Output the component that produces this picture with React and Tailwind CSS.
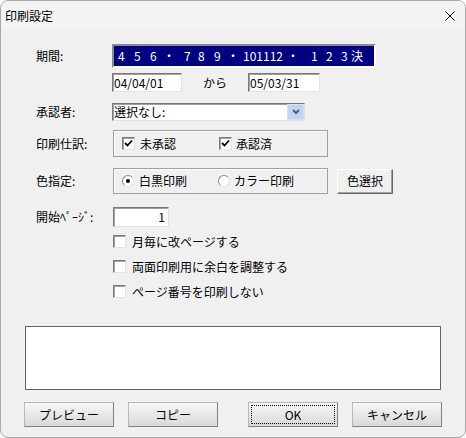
import React from "react";

const sunken =
  "border border-t-[#7a7a7a] border-l-[#7a7a7a] border-r-[#e3e3e3] border-b-[#e3e3e3] bg-white shadow-[inset_1px_1px_0_#a0a0a0]";

const periodTokens = [
  ["4", 16],
  ["5", 16],
  ["6", 13],
  ["・", 21],
  ["7", 14],
  ["8", 16],
  ["9", 13],
  ["・", 16],
  ["101112", 44],
  ["・", 24],
  ["1", 15],
  ["2", 15],
  ["3", 10],
  ["決", 14],
];

const CheckBox = ({ checked }) => (
  <span className={`flex h-[13px] w-[13px] shrink-0 items-center justify-center ${sunken}`}>
    {checked && (
      <svg width="9" height="9" viewBox="0 0 9 9">
        <path d="M1 4 L3.5 6.5 L8 1.5" fill="none" stroke="#000" strokeWidth="1.8" />
      </svg>
    )}
  </span>
);

const Radio = ({ checked }) => (
  <span className="flex h-[12px] w-[12px] shrink-0 items-center justify-center rounded-full border border-t-[#8a8a8a] border-l-[#8a8a8a] border-r-[#e3e3e3] border-b-[#e3e3e3] bg-white">
    {checked && <span className="h-[4px] w-[4px] rounded-full bg-black" />}
  </span>
);

const Button = ({ children, focus }) => (
  <button className="relative flex h-[25px] w-[90px] items-center justify-center border border-[#b8b8b8] border-r-[#7f7f7f] border-b-[#7f7f7f] bg-gradient-to-b from-[#f7f7f7] to-[#d9d9d9] text-[12px] text-black">
    {focus && <span className="pointer-events-none absolute inset-[2px] border border-dotted border-black" />}
    {children}
  </button>
);

export default function App() {
  return (
    <div className="h-[438px] w-[466px] overflow-hidden rounded-[8px] border border-[#a8a8a8] bg-[#f0f0f0] font-['Noto_Sans_CJK_JP',sans-serif] text-[12px] leading-none text-black">
      <div className="flex h-[29px] items-center justify-between bg-[#f3f3f3] pl-[4px] pr-[10px]">
        <span className="text-[12px]">印刷設定</span>
        <svg width="10" height="10" viewBox="0 0 10 10">
          <path d="M0.5 0.5 L9.5 9.5 M9.5 0.5 L0.5 9.5" stroke="#000" strokeWidth="1" />
        </svg>
      </div>

      <div className="pl-[35px] pt-[14px]">
        <div className="flex h-[24px] items-center">
          <span className="w-[76px]">期間:</span>
          <div className="h-[24px] w-[264px] border-2 border-t-[#8a8a8a] border-l-[#8a8a8a] border-r-white border-b-white">
            <div className="flex h-full items-center bg-[#000080] pl-[4px] pr-[1px] text-white">
              {periodTokens.map(([t, w], i) => (
                <span key={i} className="shrink-0 whitespace-nowrap" style={{ width: w }}>
                  {t}
                </span>
              ))}
            </div>
          </div>
        </div>

        <div className="ml-[76px] mt-[5px] flex h-[19px] items-center">
          <div className={`flex h-[19px] w-[70px] items-center pl-[1px] ${sunken}`}>04/04/01</div>
          <span className="w-[66px] text-center">から</span>
          <div className={`flex h-[19px] w-[72px] items-center pl-[1px] ${sunken}`}>05/03/31</div>
        </div>

        <div className="mt-[11px] flex h-[18px] items-center">
          <span className="w-[76px]">承認者:</span>
          <div className={`flex h-[18px] w-[193px] items-center justify-between ${sunken}`}>
            <span className="pl-[1px]">選択なし:</span>
            <span className="flex h-[16px] w-[17px] items-center justify-center border border-[#d6e0f5] bg-[#c3d3f3]">
              <svg width="8" height="6" viewBox="0 0 8 6">
                <path d="M1 1 L4 4 L7 1" fill="none" stroke="#4d6185" strokeWidth="2" />
              </svg>
            </span>
          </div>
        </div>

        <div className="mt-[9px] flex items-center">
          <span className="w-[77px]">印刷仕訳:</span>
          <div className="flex h-[27px] w-[215px] items-center border border-[#a0a0a0] pl-[8px] shadow-[inset_1px_1px_0_#fff]">
            <div className="flex w-[97px] items-center gap-[5px]">
              <CheckBox checked />
              <span>未承認</span>
            </div>
            <div className="flex items-center gap-[4px]">
              <CheckBox checked />
              <span>承認済</span>
            </div>
          </div>
        </div>

        <div className="mt-[11px] flex items-center">
          <span className="w-[77px]">色指定:</span>
          <div className="flex h-[26px] w-[215px] items-center border border-[#a0a0a0] pl-[8px] shadow-[inset_1px_1px_0_#fff]">
            <div className="flex w-[96px] items-center gap-[5px]">
              <Radio checked />
              <span>白黒印刷</span>
            </div>
            <div className="flex items-center gap-[4px]">
              <Radio />
              <span>カラー印刷</span>
            </div>
          </div>
          <button className="ml-[9px] flex h-[25px] w-[56px] items-center justify-center border border-t-white border-l-white border-r-[#696969] border-b-[#696969] bg-[#f0f0f0] text-[12px] shadow-[inset_-1px_-1px_0_#a0a0a0]">
            色選択
          </button>
        </div>

        <div className="mt-[13px] flex items-center">
          <span className="w-[77px]">開始ﾍﾟｰｼﾞ:</span>
          <div className={`flex h-[20px] w-[56px] items-center justify-end pr-[3px] ${sunken}`}>1</div>
        </div>

        <div className="ml-[77px] mt-[2px] flex flex-col">
          {["月毎に改ページする", "両面印刷用に余白を調整する", "ページ番号を印刷しない"].map((t) => (
            <div key={t} className="flex h-[25px] items-center gap-[6px]">
              <CheckBox />
              <span>{t}</span>
            </div>
          ))}
        </div>
      </div>

      <div className="ml-[24px] mt-[22px] h-[64px] w-[416px] border border-[#646464] bg-white" />

      <div className="ml-[23px] mt-[12px] flex items-center">
        <Button>プレビュー</Button>
        <div className="ml-[14px]">
          <Button>コピー</Button>
        </div>
        <div className="ml-[30px]">
          <Button focus>OK</Button>
        </div>
        <div className="ml-[14px]">
          <Button>キャンセル</Button>
        </div>
      </div>
    </div>
  );
}
